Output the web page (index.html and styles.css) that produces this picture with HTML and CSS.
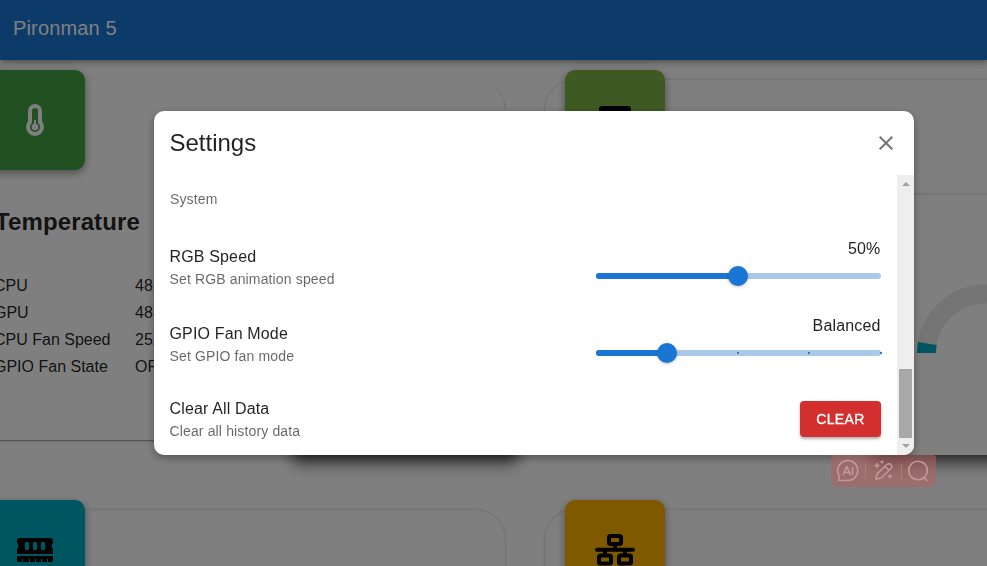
FILE: index.html
```html
<!DOCTYPE html>
<html lang="en">
<head>
<meta charset="utf-8">
<title>Pironman 5</title>
<link rel="stylesheet" href="styles.css">
</head>
<body>
<header class="appbar">Pironman 5</header>
<main class="dashboard">
  <section class="card">
    <div class="tile green">
      <svg width="40" height="40" viewBox="0 0 40 40" fill="none" stroke="#fff"><path d="M15 11a5 5 0 0 1 10 0V22a7 7 0 1 1-10 0z" stroke-width="4"/><circle cx="20" cy="27" r="3.300" fill="#fff" stroke="none"/><path d="M20 20v7" stroke-width="2"/></svg>
    </div>
    <div class="info">
      <h2>Temperature</h2>
      <dl><dt>CPU</dt><dd>48</dd><dt>GPU</dt><dd>48</dd><dt>CPU Fan Speed</dt><dd>252</dd><dt>GPIO Fan State</dt><dd>OFF</dd></dl>
    </div>
    <div class="gauge"></div>
  </section>
  <section class="card">
    <div class="tile lime">
      <svg width="40" height="40" viewBox="0 0 40 40"><rect x="4" y="6" width="32" height="28" rx="3"/></svg>
    </div>
    <div class="gauge">
      <svg width="160" height="90" viewBox="0 0 160 90" fill="none" stroke-width="19"><path d="M11.500 78a59 59 0 0 1 118 0" stroke="#eaeaea"/><path d="M11.500 78a59 59 0 0 1 .800-9.500" stroke="#00acc1"/></svg>
    </div>
  </section>
  <section class="card">
    <div class="tile teal">
      <svg width="40" height="40" viewBox="0 0 40 40"><path fill-rule="evenodd" d="M5 8h30q3 0 3 3v2q-3 3 0 6v5H2v-5q3-3 0-6v-2q0-3 3-3zM9.800 14v4q0 2.200 2.200 2.200t2.200-2.200v-4q0-2.200-2.200-2.200t-2.200 2.200zM17.800 14v4q0 2.200 2.200 2.200t2.200-2.200v-4q0-2.200-2.200-2.200t-2.200 2.200zM25.800 14v4q0 2.200 2.200 2.200t2.200-2.200v-4q0-2.200-2.200-2.200t-2.200 2.200zM2 26h36v4q0 2-2 2h-3v-3h-1v3h-5v-3h-1v3h-5v-3h-1v3h-5v-3h-1v3H8v-3H7v3H4q-2 0-2-2z"/></svg>
    </div>
  </section>
  <section class="card">
    <div class="tile amber">
      <svg width="40" height="40" viewBox="0 0 40 40" fill="none" stroke="#000" stroke-width="4"><rect x="14" y="6" width="12" height="8" rx="1.500"/><path d="M2 19.700h36" stroke-linecap="round"/><path d="M20 14v6M10 20v6M30 20v6"/><rect x="4" y="25.500" width="12" height="8" rx="1.500"/><rect x="24" y="25.500" width="12" height="8" rx="1.500"/></svg>
    </div>
  </section>
</main>
<div class="backdrop">
  <div class="dialog">
    <div class="head"><h1>Settings</h1><svg width="24" height="24" viewBox="0 0 24 24" fill="#757575"><path d="M19 6.410 17.590 5 12 10.590 6.410 5 5 6.410 10.590 12 5 17.590 6.410 19 12 13.410 17.590 19 19 17.590 13.410 12z"/></svg></div>
    <div class="body">
      <div class="list">
        <div class="subheader">System</div>
        <div class="row">
          <div class="label"><b>RGB Speed</b><span>Set RGB animation speed</span></div>
          <div class="control"><b>50%</b><div class="slider"><i class="fill half"></i><i class="thumb"></i></div></div>
        </div>
        <div class="row fan">
          <div class="label"><b>GPIO Fan Mode</b><span>Set GPIO fan mode</span></div>
          <div class="control"><b>Balanced</b><div class="slider"><i class="fill quarter"></i><i class="thumb"></i><i class="mark m2"></i><i class="mark m3"></i><i class="mark m4"></i></div></div>
        </div>
        <div class="row clear">
          <div class="label"><b>Clear All Data</b><span>Clear all history data</span></div>
          <button>CLEAR</button>
        </div>
      </div>
      <div class="scrollbar"><i class="up"></i><i class="handle"></i><i class="down"></i></div>
    </div>
  </div>
</div>
<div class="tools">
  <svg width="24" height="24" viewBox="0 0 24 24" fill="none" stroke="currentColor" stroke-width="1.600"><path d="M3 21.500V16.500A10 10 0 1 1 12 21.500z"/><path d="m7 16 3.500-8h.500l3.500 8M8.500 13.500h5M16.500 8v8"/></svg>
  <i></i>
  <svg width="24" height="24" viewBox="0 0 24 24" fill="none" stroke="currentColor" stroke-width="1.500"><path d="m4 20 1-5L15 5.500a2.800 2.800 0 0 1 4 4L9 19zM13 7.500l4 4"/><path d="M5 4v5M2.500 6.500h5M10 1.500v3M8.500 3h3M18 15.500v4M16 17.500h4"/></svg>
  <i></i>
  <svg width="24" height="24" viewBox="0 0 24 24" fill="none" stroke="currentColor" stroke-width="1.600"><circle cx="11" cy="11.500" r="9.300"/><path d="m17 18 3 4"/></svg>
</div>
</body>
</html>
```
FILE: styles.css
```css
* { box-sizing: border-box; }
html { overflow: hidden; }
body { margin: 0; height: 566px; overflow: hidden; background: #fff; font: 16px/24px "Liberation Sans", Arial, sans-serif; color: rgba(0,0,0,.87); }
h1, h2, dl, dd { margin: 0; }
b { font-weight: 400; }
.appbar { position: relative; height: 60px; padding: 12px 13px; background: #1976d2; color: #fff; font-size: 20px; line-height: 32px; letter-spacing: .15px; box-shadow: 0 2px 4px -1px rgba(0,0,0,.2), 0 4px 5px rgba(0,0,0,.14), 0 1px 10px rgba(0,0,0,.12); }
.dashboard { display: grid; grid-template-columns: 540px 540px; grid-template-rows: 360px 360px; gap: 70px 40px; width: 1120px; margin: 20px 0 0 -35px; }
.card { position: relative; border-radius: 30px 30px 0 0; box-shadow: 0 0 3px rgba(0,0,0,.25); }
.card:first-child { box-shadow: 0 1px 2px rgba(0,0,0,.45); }
.tile { position: absolute; left: 20px; top: -10px; width: 100px; height: 100px; border-radius: 10px; display: flex; align-items: center; justify-content: center; box-shadow: 0 3px 8px rgba(0,0,0,.4); }
.green { background: #43a047; }
.lime { background: #7cb342; }
.teal { background: #00acc1; }
.amber { background: #ffb300; }
.info { padding: 124px 0 0 30px; }
h2 { font-size: 24px; line-height: 36px; letter-spacing: .12px; }
dl { display: grid; grid-template-columns: 140px 60px; grid-auto-rows: 27px; line-height: 27px; margin-top: 32px; }
dt { text-indent: -1px; }
.gauge { position: absolute; left: 324px; top: 115px; width: 232px; height: 260px; border-radius: 10px; box-shadow: 0 11px 16px -3px rgba(0,0,0,.65), 0 0 4px rgba(0,0,0,.2); background: #fff; }
.gauge svg { position: absolute; left: 46px; top: 80px; }
.backdrop { position: fixed; inset: 0; background: rgba(0,0,0,.5); display: flex; align-items: center; justify-content: center; padding-left: 81px; }
.dialog { width: 760px; height: 344px; border-radius: 10px; overflow: hidden; background: #fff; box-shadow: 0 3px 8px rgba(0,0,0,.35); display: flex; flex-direction: column; }
.head { height: 64px; padding: 0 16px 0 15.5px; display: flex; align-items: center; justify-content: space-between; }
h1 { font-size: 24px; font-weight: 400; }
.body { flex: 1; display: flex; }
.list { flex: 1; padding: 0 16px; }
.subheader { line-height: 48px; font-size: 14px; color: rgba(0,0,0,.6); letter-spacing: .14px; }
.row { display: flex; justify-content: space-between; height: 77px; padding-top: 21px; }
.label { margin: 1px 0 0 -.5px; }
.label b, .label span { display: block; }
.label b, .control b { letter-spacing: .15px; }
.label span { font-size: 14px; line-height: 20px; color: rgba(0,0,0,.6); letter-spacing: .14px; }
.control { width: 285px; text-align: right; margin-top: -7px; }
.control b { display: block; padding-right: .5px; }
.slider { position: relative; height: 6px; border-radius: 3px; background: #aac8e8; margin-top: 12px; }
.slider i { position: absolute; }
.fill { left: 0; top: 0; height: 6px; border-radius: 3px; background: #1976d2; }
.half { width: 50%; }
.quarter { width: 25%; }
.thumb { width: 20px; height: 20px; top: -7px; left: calc(50% - 10.5px); border-radius: 50%; background: #1976d2; box-shadow: 0 1px 3px rgba(0,0,0,.25); }
.fan .thumb { left: calc(25% - 10.25px); }
.mark { width: 2px; height: 2px; top: 2px; background: #4478ad; }
.m2 { left: calc(50% - 1.5px); }
.m3 { left: calc(75% - 1.5px); }
.m4 { left: calc(100% - 1px); }
.clear { padding-top: 19px; }
button { width: 81px; height: 36px; margin-top: 5px; padding: 0; border: 0; border-radius: 4px; background: #d32f2f; color: #fff; font: 14px "Liberation Sans", Arial, sans-serif; letter-spacing: .4px; -webkit-text-stroke: .3px #fff; box-shadow: 0 2px 3px rgba(0,0,0,.3); }
.scrollbar { width: 17px; background: #eee; display: flex; flex-direction: column; align-items: center; }
.up { margin-top: 7px; border: solid transparent; border-width: 0 4px 4px; border-bottom-color: #a3a3a3; }
.handle { width: 13px; height: 69px; margin-top: 183px; background: #a8a8a8; }
.down { margin-top: 6px; border: solid transparent; border-width: 4px 4px 0; border-top-color: #a3a3a3; }
.tools { position: absolute; left: 831px; top: 455px; width: 105px; height: 32px; padding: 0 5px; border-radius: 3px 3px 8px 8px; background: rgba(180,95,95,.55); color: #c09a9a; display: flex; align-items: center; justify-content: space-between; }
.tools i { width: 1px; height: 15px; background: #ad7878; }
```
